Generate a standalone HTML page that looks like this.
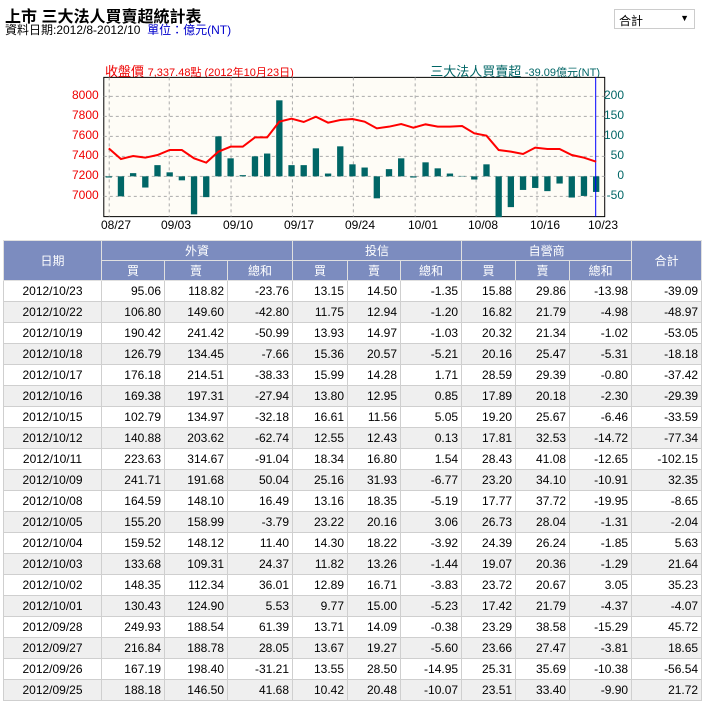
<!DOCTYPE html><html><head><meta charset="utf-8"><style>
body{margin:0;width:704px;height:700px;overflow:hidden;background:#fff;font-family:"Liberation Sans","Noto Sans CJK TC",sans-serif;font-size:12px;color:#000;position:relative}
.a{position:absolute;white-space:nowrap}
table{position:absolute;left:3px;top:240px;border-collapse:collapse;table-layout:fixed;width:698px}
td,th{border:1px solid #cfcfcf;height:20px;padding:0 3px;font-weight:normal}
th{background:#7c8cbf;color:#fff;text-align:center;border-color:#e0e0e0;height:19px}
td{text-align:right}
td:first-child{text-align:center}
tr.e td{background:#efefef}
</style></head><body>
<div class="a" style="left:5px;top:3px;font-size:16px;font-weight:bold">上市 三大法人買賣超統計表</div>
<div class="a" style="left:5px;top:21px">資料日期:2012/8-2012/10 &nbsp;<span style="color:#00c">單位：億元(NT)</span></div>
<div class="a" style="left:614px;top:9px;width:81px;height:20px;border:1px solid #ccc;box-sizing:border-box;padding:2px 4px;font-size:12px">合計<span style="position:absolute;right:5px;top:3px;font-size:9px">▼</span></div>
<div class="a" style="left:105px;top:61px;color:#e00;font-size:13px">收盤價 <span style="font-size:11px">7,337.48點 (2012年10月23日)</span></div>
<div class="a" style="right:104px;top:61px;color:#066;font-size:13px">三大法人買賣超 <span style="font-size:11px">-39.09億元(NT)</span></div>
<svg class="a" style="left:0;top:0" width="704" height="240" viewBox="0 0 1560 720" preserveAspectRatio="none">
<rect x="230" y="232" width="1110" height="418" fill="#fefcf6" stroke="#000" stroke-width="1" vector-effect="non-scaling-stroke"/>
<g stroke="#aaa" stroke-dasharray="3,3" vector-effect="non-scaling-stroke">
<path vector-effect="non-scaling-stroke" d="M230 289H1340M230 349H1340M230 409H1340M230 469H1340M230 529H1340M230 589H1340M242 232V650M375 232V650M512 232V650M648 232V650M783 232V650M920 232V650M1055 232V650M1190 232V650"/></g>
<g fill="#006666" id="b"></g>
<line x1="1320" y1="232" x2="1320" y2="650" stroke="#00f" vector-effect="non-scaling-stroke"/>
<polyline fill="none" stroke="#f00" stroke-width="2" vector-effect="non-scaling-stroke" points="241,445 268,477 295,468 322,473 349,465 376,450 403,450 430,475 457,488 484,455 511,440 538,440 565,412 592,412 619,365 646,356 673,366 700,350 727,368 754,360 781,357 808,365 835,385 862,380 889,372 916,383 943,373 970,380 997,380 1024,378 1051,400 1078,407 1105,450 1132,455 1159,462 1186,443 1213,447 1240,447 1267,465 1294,473 1321,485"/>
</svg>
<div class="a" style="left:72px;top:85px;color:#e00;line-height:20px;text-align:right;width:26px">8000<br>7800<br>7600<br>7400<br>7200<br>7000</div>
<div class="a" style="left:604px;top:85px;color:#066;line-height:20px;text-align:right;width:20px">200<br>150<br>100<br>50<br>0<br>-50</div>
<div class="a" style="top:218px;left:0;width:704px;height:14px">
<span class="a" style="left:101px">08/27</span><span class="a" style="left:161px">09/03</span><span class="a" style="left:223px">09/10</span><span class="a" style="left:284px">09/17</span><span class="a" style="left:345px">09/24</span><span class="a" style="left:408px">10/01</span><span class="a" style="left:468px">10/08</span><span class="a" style="left:530px">10/16</span><span class="a" style="left:588px">10/23</span></div>
<table>
<colgroup><col style="width:98px"><col style="width:63px"><col style="width:63px"><col style="width:65px"><col style="width:55px"><col style="width:53px"><col style="width:61px"><col style="width:54px"><col style="width:54px"><col style="width:62px"><col style="width:70px"></colgroup>
<tr><th rowspan="2">日期</th><th colspan="3">外資</th><th colspan="3">投信</th><th colspan="3">自營商</th><th rowspan="2">合計</th></tr>
<tr><th>買</th><th>賣</th><th>總和</th><th>買</th><th>賣</th><th>總和</th><th>買</th><th>賣</th><th>總和</th></tr>
<tbody id="t"></tbody></table>
<script>
var d=`2012/10/23 95.06 118.82 -23.76 13.15 14.50 -1.35 15.88 29.86 -13.98 -39.09
2012/10/22 106.80 149.60 -42.80 11.75 12.94 -1.20 16.82 21.79 -4.98 -48.97
2012/10/19 190.42 241.42 -50.99 13.93 14.97 -1.03 20.32 21.34 -1.02 -53.05
2012/10/18 126.79 134.45 -7.66 15.36 20.57 -5.21 20.16 25.47 -5.31 -18.18
2012/10/17 176.18 214.51 -38.33 15.99 14.28 1.71 28.59 29.39 -0.80 -37.42
2012/10/16 169.38 197.31 -27.94 13.80 12.95 0.85 17.89 20.18 -2.30 -29.39
2012/10/15 102.79 134.97 -32.18 16.61 11.56 5.05 19.20 25.67 -6.46 -33.59
2012/10/12 140.88 203.62 -62.74 12.55 12.43 0.13 17.81 32.53 -14.72 -77.34
2012/10/11 223.63 314.67 -91.04 18.34 16.80 1.54 28.43 41.08 -12.65 -102.15
2012/10/09 241.71 191.68 50.04 25.16 31.93 -6.77 23.20 34.10 -10.91 32.35
2012/10/08 164.59 148.10 16.49 13.16 18.35 -5.19 17.77 37.72 -19.95 -8.65
2012/10/05 155.20 158.99 -3.79 23.22 20.16 3.06 26.73 28.04 -1.31 -2.04
2012/10/04 159.52 148.12 11.40 14.30 18.22 -3.92 24.39 26.24 -1.85 5.63
2012/10/03 133.68 109.31 24.37 11.82 13.26 -1.44 19.07 20.36 -1.29 21.64
2012/10/02 148.35 112.34 36.01 12.89 16.71 -3.83 23.72 20.67 3.05 35.23
2012/10/01 130.43 124.90 5.53 9.77 15.00 -5.23 17.42 21.79 -4.37 -4.07
2012/09/28 249.93 188.54 61.39 13.71 14.09 -0.38 23.29 38.58 -15.29 45.72
2012/09/27 216.84 188.78 28.05 13.67 19.27 -5.60 23.66 27.47 -3.81 18.65
2012/09/26 167.19 198.40 -31.21 13.55 28.50 -14.95 25.31 35.69 -10.38 -56.54
2012/09/25 188.18 146.50 41.68 10.42 20.48 -10.07 23.51 33.40 -9.90 21.72`.split("\n"),h="";
d.forEach(function(r,i){h+='<tr'+(i%2?' class="e"':'')+'><td>'+r.split(" ").join("</td><td>")+"</td></tr>"});
document.getElementById("t").innerHTML=h;
var v=[-3,-50,8,-28,28,10,-10,-95,-52,100,45,3,50,57,190,28,28,70,7,75,30,22,-55,18,45,-3,35,20,7,1,-8,30,-102,-77,-34,-29,-37,-18,-53,-49,-39],s="";
v.forEach(function(x,i){var c=241+i*27,y=529;var hh=Math.abs(x)*1.2;s+='<rect x="'+(c-7)+'" y="'+(x>0?y-hh:y)+'" width="14" height="'+hh+'"/>'});
document.getElementById("b").innerHTML=s;
</script>
</body></html>
